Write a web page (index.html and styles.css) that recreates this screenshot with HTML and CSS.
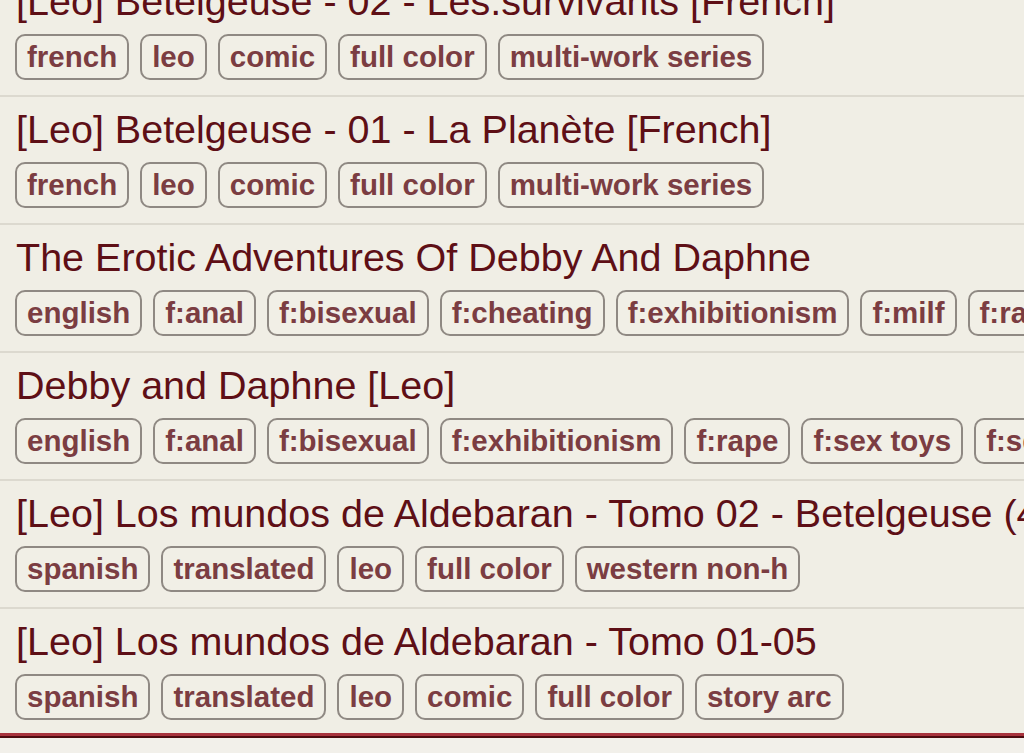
FILE: index.html
```html
<!DOCTYPE html>
<html>
<head>
<meta charset="utf-8">
<link rel="stylesheet" href="styles.css">
</head>
<body>
<div class="list">
  <div class="row">
    <div class="title">[Leo] Betelgeuse - 02 - Les.survivants [French]</div>
    <div class="tags"><span class="tag">french</span><span class="tag">leo</span><span class="tag">comic</span><span class="tag">full color</span><span class="tag">multi-work series</span></div>
  </div>
  <div class="row">
    <div class="title">[Leo] Betelgeuse - 01 - La Planète [French]</div>
    <div class="tags"><span class="tag">french</span><span class="tag">leo</span><span class="tag">comic</span><span class="tag">full color</span><span class="tag">multi-work series</span></div>
  </div>
  <div class="row">
    <div class="title">The Erotic Adventures Of Debby And Daphne</div>
    <div class="tags"><span class="tag">english</span><span class="tag">f:anal</span><span class="tag">f:bisexual</span><span class="tag">f:cheating</span><span class="tag">f:exhibitionism</span><span class="tag">f:milf</span><span class="tag">f:rape</span><span class="tag">f:sex toys</span></div>
  </div>
  <div class="row">
    <div class="title">Debby and Daphne [Leo]</div>
    <div class="tags"><span class="tag">english</span><span class="tag">f:anal</span><span class="tag">f:bisexual</span><span class="tag">f:exhibitionism</span><span class="tag">f:rape</span><span class="tag">f:sex toys</span><span class="tag">f:squirting</span></div>
  </div>
  <div class="row">
    <div class="title">[Leo] Los mundos de Aldebaran - Tomo 02 - Betelgeuse (4)</div>
    <div class="tags"><span class="tag">spanish</span><span class="tag">translated</span><span class="tag">leo</span><span class="tag">full color</span><span class="tag">western non-h</span></div>
  </div>
  <div class="row last">
    <div class="title">[Leo] Los mundos de Aldebaran - Tomo 01-05</div>
    <div class="tags"><span class="tag">spanish</span><span class="tag">translated</span><span class="tag">leo</span><span class="tag">comic</span><span class="tag">full color</span><span class="tag">story arc</span></div>
  </div>
</div>
</body>
</html>
```
FILE: styles.css
```css
html, body {
  margin: 0;
  padding: 0;
  background: #f2f0ea;
  overflow: hidden;
  height: 753px;
}
.list {
  margin-top: -33px;
  font-family: "Liberation Sans", Arial, sans-serif;
}
.row {
  border-top: 2px solid #dcd9cf;
  padding: 10px 0 15px 15px;
  background: #f0eee5;
  overflow: hidden;
}
.row.last {
  padding-bottom: 13px;
  border-bottom: 3px solid #a8333d;
  box-shadow: 0 2px 0 #4d0b10;
}
.title {
  font-size: 39.5px;
  line-height: 45px;
  color: #5e0f16;
  white-space: nowrap;
  padding-left: 1px;
}
.tags {
  display: flex;
  gap: 11px;
  margin-top: 10px;
  white-space: nowrap;
}
.tag {
  flex: none;
  font-size: 29.5px;
  font-weight: bold;
  line-height: 42px;
  height: 42px;
  padding: 0 10px;
  border: 2px solid #8f8983;
  border-radius: 10px;
  color: #7b3d42;
  background: #f1efe6;
}
```
